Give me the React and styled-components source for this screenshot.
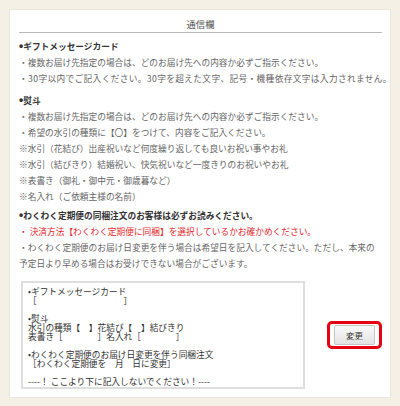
import styled, { createGlobalStyle } from "styled-components"

const GlobalStyle = createGlobalStyle`
    html, body {
        margin: 0;
        padding: 0;
        background-color: #f5f0e6;
    }
    body {
        font-family: "Noto Sans CJK JP", "Noto Sans", sans-serif;
    }
`

const Page = styled.div`
    width: 400px;
    height: 406px;
    box-sizing: border-box;
    padding: 9px;
    background-color: #f5f0e6;
`

const Panel = styled.div`
    background-color: #fff;
    border: 1px solid #ebe6dc;
    box-sizing: border-box;
    height: 389px;
    padding: 0 8px 11px 9px;
`

const Title = styled.div`
    padding-top: 6px;
    line-height: 16px;
    font-size: 9.3px;
    color: #555;
    text-align: center;
    border-bottom: 1px solid #b8b8b8;
`

const Section = styled.div`
    margin-top: ${props => props.$gap}px;
`

const Heading = styled.div`
    font-size: 8.7px;
    line-height: 16px;
    font-weight: bold;
    color: #333;
    white-space: nowrap;
`

const Dot = styled.span`
    font-family: "Liberation Sans", sans-serif;
    font-size: 12px;
    line-height: 0;
`

const Line = styled.div`
    font-size: 8.7px;
    line-height: 16px;
    color: ${props => props.$red ? "#e3262b" : "#666"};
    white-space: nowrap;
    letter-spacing: ${props => props.$spread || 0}px;
`

const FormRow = styled.div`
    display: flex;
    align-items: center;
    gap: 22px;
    margin-top: 9px;
    padding-left: 2px;
`

const MessageBox = styled.textarea`
    width: 290px;
    height: 108px;
    box-sizing: border-box;
    margin: 0;
    padding: 4px 5px;
    border: 2px solid #dedede;
    font-family: "Noto Sans CJK JP", "Noto Sans", sans-serif;
    font-size: 8.7px;
    line-height: 9px;
    color: #333;
    resize: none;
    overflow: hidden;
    outline: none;
`

const Highlight = styled.div`
    border: 3px solid #e60012;
    border-radius: 5px;
    padding: 1px 4px;
    display: flex;
`

const Button = styled.button`
    width: 41px;
    height: 20px;
    padding: 0;
    border: 1px solid #c6c6c6;
    border-radius: 2px;
    background: linear-gradient(#f9f9f9, #e3e3e3);
    font-family: "Noto Sans CJK JP", "Noto Sans", sans-serif;
    font-size: 8.5px;
    color: #333;
`

const message = [
    "•ギフトメッセージカード",
    "［　　　　　　　　　　］",
    "",
    "•熨斗",
    "水引の種類【　】花結び【　】結びきり",
    "表書き［　　　　］名入れ［　　　　］",
    "",
    "•わくわく定期便のお届け日変更を伴う同梱注文",
    "［わくわく定期便を　月　日に変更］",
    "",
    "----！ ここより下に記入しないでください！----",
].join("\n")

const App = () => {
    return(
        <Page>
            <GlobalStyle />
            <Panel>
                <Title>通信欄</Title>
                <Section $gap={6}>
                    <Heading><Dot>•</Dot>ギフトメッセージカード</Heading>
                    <Line>・複数お届け先指定の場合は、どのお届け先への内容か必ずご指示ください。</Line>
                    <Line $spread={0.35}>・30字以内でご記入ください。30字を超えた文字、記号・機種依存文字は入力されません。</Line>
                </Section>
                <Section $gap={6}>
                    <Heading><Dot>•</Dot>熨斗</Heading>
                    <Line>・複数お届け先指定の場合は、どのお届け先への内容か必ずご指示ください。</Line>
                    <Line>・希望の水引の種類に【〇】をつけて、内容をご記入ください。</Line>
                    <Line>※水引（花結び）出産祝いなど何度繰り返しても良いお祝い事やお礼</Line>
                    <Line>※水引（結びきり）結婚祝い、快気祝いなど一度きりのお祝いやお礼</Line>
                    <Line>※表書き（御礼・御中元・御歳暮など）</Line>
                    <Line>※名入れ（ご依頼主様の名前）</Line>
                </Section>
                <Section $gap={3}>
                    <Heading><Dot>•</Dot>わくわく定期便の同梱注文のお客様は必ずお読みください。</Heading>
                    <Line $red>・ 決済方法【わくわく定期便に同梱】を選択しているかお確かめください。</Line>
                    <Line>・わくわく定期便のお届け日変更を伴う場合は希望日を記入してください。ただし、本来の</Line>
                    <Line>予定日より早める場合はお受けできない場合がございます。</Line>
                </Section>
                <FormRow>
                    <MessageBox defaultValue={message} />
                    <Highlight>
                        <Button type="button">変更</Button>
                    </Highlight>
                </FormRow>
            </Panel>
        </Page>
    )
}

export default App
